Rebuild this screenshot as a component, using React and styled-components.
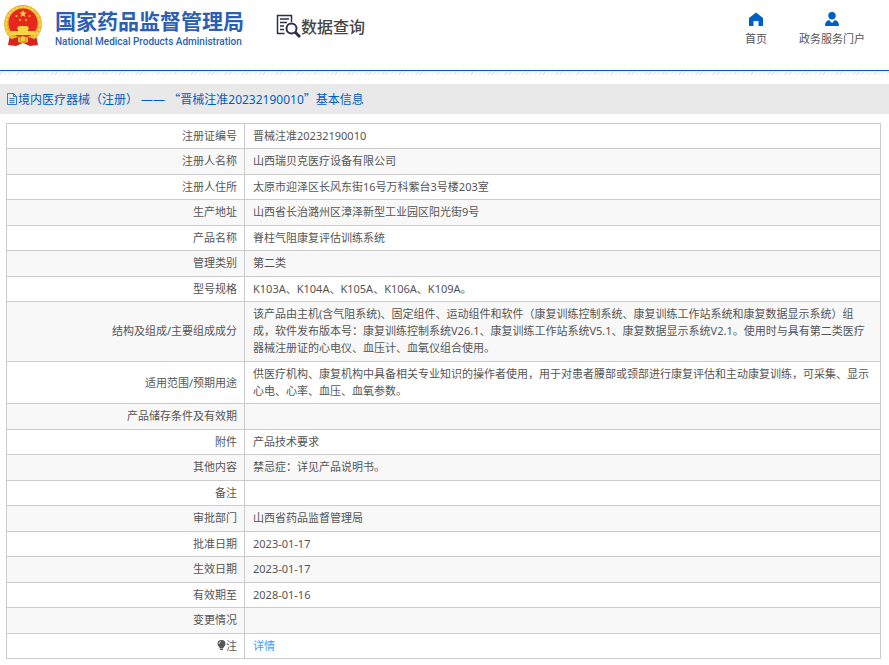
import React from "react"
import styled, { createGlobalStyle } from "styled-components"

const GlobalStyle = createGlobalStyle`
  body {
    margin: 0;
    background: #fff;
    color: #555;
    font-family: "Noto Sans", "Noto Sans CJK SC", sans-serif;
    font-size: 11px;
    line-height: 17px;
  }
`

const Header = styled.header`
  display: flex;
  align-items: flex-start;
  justify-content: space-between;
  height: 70px;
  border-bottom: 1px solid #005dbf;
`

const Brand = styled.div`
  display: flex;
  align-items: flex-start;
  padding: 4px 0 0 3px;
`

const LogoLink = styled.a`
  display: flex;
  gap: 12px;
  color: #2b5fb3;
  text-decoration: none;
`

const OrgName = styled.span`
  display: block;
  font-family: "Noto Sans CJK SC", sans-serif;
  font-weight: bold;
  font-size: 21px;
  line-height: 32px;
  white-space: nowrap;
`

const OrgNameEnglish = styled.span`
  display: block;
  font-family: Roboto, sans-serif;
  font-weight: 500;
  font-size: 10px;
  line-height: 12px;
  white-space: nowrap;
`

const Section = styled.div`
  display: flex;
  align-items: center;
  margin: 8px 0 0 32px;
`

const SectionTitle = styled.h1`
  margin: 0;
  color: #444;
  font-family: "Noto Sans CJK SC", sans-serif;
  font-weight: 500;
  font-size: 16px;
  line-height: 28px;
  white-space: nowrap;
`

const Nav = styled.nav`
  display: flex;
  gap: 32px;
  padding: 12px 24px 0 0;
`

const NavLink = styled.a`
  display: flex;
  flex-direction: column;
  align-items: center;
  gap: 4px;
  color: #555;
  text-decoration: none;
  white-space: nowrap;
`

const Hatch = styled.div`
  height: 4px;
  margin-bottom: 9px;
  background: repeating-linear-gradient(135deg, #fff 0 2px, #e6e6e6 2px 3px);
`

const TitleBar = styled.h2`
  display: flex;
  align-items: center;
  height: 30px;
  margin: 0;
  padding-left: 6px;
  background: #e9e9e9;
  color: #005dbf;
  font-weight: normal;
  font-size: 12px;
`

const WideQuote = styled.span`
  font-family: "Noto Sans CJK SC", sans-serif;
`

const InfoTable = styled.table`
  width: calc(100% - 14px);
  margin: 9px 8px 5px 6px;
  border-collapse: collapse;
  table-layout: fixed;
`

const Row = styled.tr`
  &:nth-child(even) {
    background: #f8f8f8;
  }
  &:nth-child(even) > * {
    padding-bottom: 5px;
  }
`

const Label = styled.th`
  width: 222px;
  height: 17px;
  padding: 3px 7px 4px 8px;
  border: 1px solid #ccc;
  font-weight: normal;
  text-align: right;
`

const Value = styled.td`
  padding: 3px 8px 4px;
  border: 1px solid #ccc;
`

const DetailLink = styled.a`
  color: #409eff;
  text-decoration: none;
`

const rows = [
  ["注册证编号", "晋械注准20232190010"],
  ["注册人名称", "山西瑞贝克医疗设备有限公司"],
  ["注册人住所", "太原市迎泽区长风东街16号万科紫台3号楼203室"],
  ["生产地址", "山西省长治潞州区漳泽新型工业园区阳光街9号"],
  ["产品名称", "脊柱气阻康复评估训练系统"],
  ["管理类别", "第二类"],
  ["型号规格", "K103A、K104A、K105A、K106A、K109A。"],
  [
    "结构及组成/主要组成成分",
    "该产品由主机(含气阻系统)、固定组件、运动组件和软件（康复训练控制系统、康复训练工作站系统和康复数据显示系统）组成，软件发布版本号：康复训练控制系统V26.1、康复训练工作站系统V5.1、康复数据显示系统V2.1。使用时与具有第二类医疗器械注册证的心电仪、血压计、血氧仪组合使用。",
  ],
  [
    "适用范围/预期用途",
    "供医疗机构、康复机构中具备相关专业知识的操作者使用，用于对患者腰部或颈部进行康复评估和主动康复训练，可采集、显示心电、心率、血压、血氧参数。",
  ],
  ["产品储存条件及有效期", ""],
  ["附件", "产品技术要求"],
  ["其他内容", "禁忌症：详见产品说明书。"],
  ["备注", ""],
  ["审批部门", "山西省药品监督管理局"],
  ["批准日期", "2023-01-17"],
  ["生效日期", "2023-01-17"],
  ["有效期至", "2028-01-16"],
  ["变更情况", ""],
]

const Emblem = () => (
  <svg width="40" height="44" viewBox="0 0 40 44" aria-hidden="true">
    <path d="M7 31L5 41l8 1 7-3 7 3 8-1-2-10z" fill="#d9231c" />
    <circle cx="20" cy="20" r="19" fill="#e9b030" />
    <circle cx="20" cy="20" r="17" fill="none" stroke="#f9d94e" strokeWidth="2" strokeDasharray="3 1" />
    <circle cx="20" cy="19" r="14.5" fill="#e8261c" />
    <path d="M20 6l1 2.6h2.8l-2.2 1.7.8 2.7-2.4-1.6-2.4 1.6.8-2.7-2.2-1.7H19z" fill="#f9d648" />
    <g fill="#f9d648">
      <circle cx="13.500" cy="12" r="1" />
      <circle cx="26.500" cy="12" r="1" />
      <circle cx="17" cy="16" r="1" />
      <circle cx="23" cy="16" r="1" />
      <path d="M14 24l2-2h8l2 2v1h-1v2h7l1 4H7l1-4h7v-2h-1z" />
    </g>
    <path d="M8 31q12 5 24 0l-2 5q-10 3-20 0z" fill="#e9b63c" />
    <path d="M9 35l6-2v8l-4-1zM31 35l-6-2v8l4-1z" fill="#d9231c" />
    <circle cx="20" cy="35" r="3" fill="#f4c94c" stroke="#d18e20" />
  </svg>
)

const SearchDocument = () => (
  <svg width="25" height="25" viewBox="0 0 25 25" fill="none" stroke="#2f2d49" aria-hidden="true">
    <path d="M15.5 8V1.5H1.5v18h7" strokeWidth="1.5" />
    <path d="M4 5h9M4 8.500h7M4 12h4M4 15.500h4" strokeWidth="1.300" />
    <circle cx="15.500" cy="14.500" r="5" strokeWidth="2" />
    <path d="M19 18l5 5" strokeWidth="3" />
  </svg>
)

const HomeIcon = () => (
  <svg width="14" height="14" viewBox="0 0 14 14" fill="#005fc4" aria-hidden="true">
    <path d="M7 .5L14 6v8H9.500V9h-5v5H0V6z" />
  </svg>
)

const UserIcon = () => (
  <svg width="14" height="14" viewBox="0 0 14 14" fill="#005fc4" aria-hidden="true">
    <circle cx="7" cy="3.700" r="3.700" />
    <path d="M0 14q0-5 4-6l3 3 3-3q4 1 4 6z" />
  </svg>
)

const DocumentIcon = () => (
  <svg width="12" height="14" viewBox="0 0 12 14" fill="none" stroke="#005dbf" aria-hidden="true">
    <path d="M1.500 1.500h6l3 3v8h-9zM7.500 1.500v3h3M3.500 6.500h5M3.500 8.500h5M3.500 10.500h5" strokeWidth=".8" />
  </svg>
)

const BulbIcon = () => (
  <svg width="9" height="10" viewBox="0 0 9 10" fill="#555" aria-hidden="true">
    <path d="M4.500 0a4 4 0 0 1 4 4c0 2-2 2.500-2.300 4.500H2.800C2.500 6.500.5 6 .5 4a4 4 0 0 1 4-4zM3 9h3v1H3z" />
    <path d="M2 4q0-2 2-2.500" fill="none" stroke="#fff" strokeWidth=".8" />
  </svg>
)

const App = () => {
  return (
    <>
      <GlobalStyle />
      <Header>
        <Brand>
          <LogoLink href="#">
            <Emblem />
            <span>
              <OrgName>国家药品监督管理局</OrgName>
              <OrgNameEnglish>National Medical Products Administration</OrgNameEnglish>
            </span>
          </LogoLink>
          <Section>
            <SearchDocument />
            <SectionTitle>数据查询</SectionTitle>
          </Section>
        </Brand>
        <Nav>
          <NavLink href="#">
            <HomeIcon />
            首页
          </NavLink>
          <NavLink href="#">
            <UserIcon />
            政务服务门户
          </NavLink>
        </Nav>
      </Header>
      <Hatch />
      <main>
        <TitleBar>
          <DocumentIcon />
          <span>
            境内医疗器械（注册） —— <WideQuote>“</WideQuote>
            晋械注准20232190010<WideQuote>”</WideQuote>基本信息
          </span>
        </TitleBar>
        <InfoTable>
          <tbody>
            {rows.map(([label, value]) => (
              <Row key={label}>
                <Label scope="row">{label}</Label>
                <Value>{value}</Value>
              </Row>
            ))}
            <Row>
              <Label scope="row">
                <BulbIcon />注
              </Label>
              <Value>
                <DetailLink href="#">详情</DetailLink>
              </Value>
            </Row>
          </tbody>
        </InfoTable>
      </main>
    </>
  )
}

export default App
